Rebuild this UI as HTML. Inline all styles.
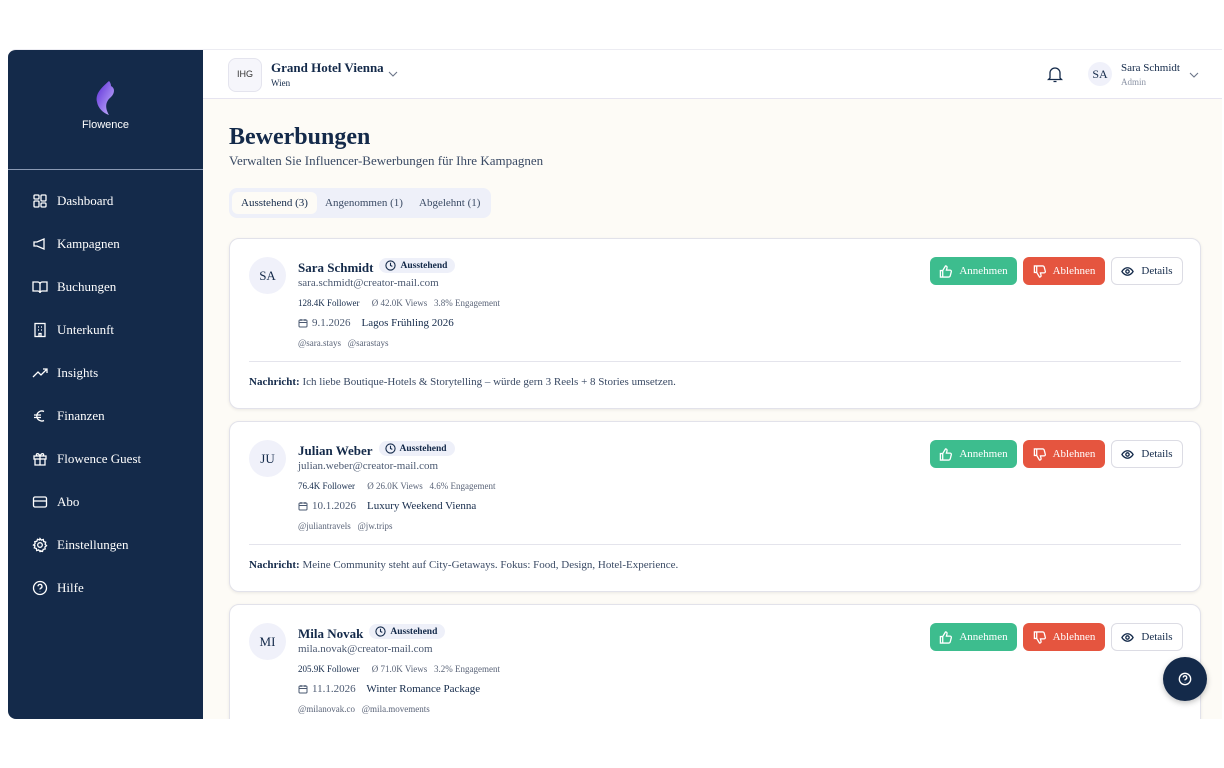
<!DOCTYPE html>
<html><head><meta charset="utf-8"><style>
*{box-sizing:border-box;margin:0;padding:0}
body{width:1224px;height:768px;background:#fff;font-family:"Liberation Serif",serif;color:#142a4a;position:relative;overflow:hidden}
.app{position:absolute;left:8px;top:49px;width:1214px;height:670px;background:#fdfbf6;border-radius:8px 0 0 8px;overflow:hidden;border-top:1px solid #ececf2}
.side{position:absolute;left:0;top:0;width:195px;height:100%;background:#142a4a;color:#fff}
.logo{height:120px;border-bottom:1px solid #8a99b3;text-align:center;font-family:"Liberation Sans",sans-serif;font-size:11px;padding-top:30px}
.nav{position:absolute;left:24px;top:129px}
.nav div{height:43px;display:flex;align-items:center;font-size:13px;color:#fff}
.nav svg{width:16px;height:16px;margin-right:9px;stroke:#fff;fill:none;stroke-width:1.3}
.head{position:absolute;left:195px;top:0;right:0;height:49px;background:#fff;border-bottom:1px solid #e6e4f0}
.main{position:absolute;left:221px;top:49px;right:0}
h1{position:absolute;top:25px;font-size:24px;font-weight:bold}
.sub{position:absolute;top:54px;font-size:13px;color:#3a4a64;white-space:nowrap}
.tabs{position:absolute;top:89px;left:0;width:262px;height:30px;background:#eef0f9;border-radius:8px;font-size:11px;color:#3a4a64}
.tabs span{position:absolute;top:4px;height:22px;line-height:22px;padding:0 8px}
.card{position:absolute;left:0;width:972px;height:171px;background:#fff;border:1px solid #e2e2ea;border-radius:10px;box-shadow:0 1px 3px rgba(0,0,0,.08)}
.av{position:absolute;left:19px;top:18px;width:37px;height:37px;border-radius:50%;background:#f0f1fa;text-align:center;line-height:37px;font-size:13px}
.nm{position:absolute;left:68px;top:19px;font-size:13px;font-weight:bold;white-space:nowrap}
.badge{display:inline-flex;align-items:center;gap:4px;margin-left:6px;background:#eef0f9;border-radius:9px;padding:2px 8px 2px 6px;font-size:9.5px;vertical-align:1px}
.em{position:absolute;left:68px;top:38px;font-size:11px;color:#4a5870}
.st{position:absolute;left:68px;top:59px;font-size:9px;color:#5a6478;white-space:nowrap}
.st b{color:#142a4a;font-weight:normal;margin-right:10px}
.dt{position:absolute;left:68px;top:78px;font-size:11px;white-space:nowrap;display:flex;align-items:center}
.hd{position:absolute;left:68px;top:99px;font-size:9px;color:#5a6478}
.hr{position:absolute;left:19px;right:19px;top:122px;border-top:1px solid #e4e4ec}
.msg{position:absolute;left:19px;top:137px;font-size:11px;color:#3a4a64;white-space:nowrap}
.msg b{color:#142a4a}
.btn{position:absolute;top:18px;height:28px;border-radius:6px;font-size:11px;display:flex;align-items:center;justify-content:center;gap:7px}
.b1{left:700px;width:87px;background:#3dbd8e;color:#fff}
.b2{left:793px;width:82px;background:#e5553f;color:#fff}
.b3{left:881px;width:72px;background:#fff;border:1px solid #dcdce4}
.btn svg{width:13px;height:13px;fill:none;stroke-width:1.4}
</style></head><body>
<div class="app">
<div class="side">
<div class="logo"><svg width="26" height="36" viewBox="0 0 26 36"><defs><linearGradient id="g" x1="0" y1="0" x2="1" y2="1"><stop offset="0" stop-color="#5b2bd6"/><stop offset="1" stop-color="#c9b8ff"/></linearGradient></defs><path d="M16 1 C8 8 2 14 4 22 C5 28 10 33 16 35 C12 28 12 22 18 17 C22 13 22 8 18 6 C18 4 17 2 16 1Z" fill="url(#g)"/></svg><div>Flowence</div></div>
<div class="nav">
<div><svg viewBox="0 0 16 16"><rect x="2" y="2" width="5" height="4" rx="1"/><rect x="9" y="2" width="5" height="6" rx="1"/><rect x="2" y="8" width="5" height="6" rx="1"/><rect x="9" y="10" width="5" height="4" rx="1"/></svg>Dashboard</div>
<div><svg viewBox="0 0 16 16"><path d="M2 6v4h3l7 3V3L5 6z"/></svg>Kampagnen</div>
<div><svg viewBox="0 0 16 16"><path d="M1 3h5c1 0 2 1 2 2v9c0-1-1-2-2-2H1zM15 3h-5c-1 0-2 1-2 2v9c0-1 1-2 2-2h5z"/></svg>Buchungen</div>
<div><svg viewBox="0 0 16 16"><rect x="3" y="1.5" width="10" height="13"/><path d="M6 5h1M9 5h1M6 8h1M9 8h1M7 14.5v-3h2v3"/></svg>Unterkunft</div>
<div><svg viewBox="0 0 16 16"><path d="M1 12l5-5 3 3 6-6M11 4h4v4"/></svg>Insights</div>
<div><svg viewBox="0 0 16 16"><path d="M12 3.5A5 5 0 1 0 12 12.5M2 7h7M2 9.5h7"/></svg>Finanzen</div>
<div><svg viewBox="0 0 16 16"><rect x="2" y="5" width="12" height="3"/><path d="M3 8v6h10V8M8 5v9M8 5C6 1 3 3 5 5M8 5c2-4 5-2 3 0"/></svg>Flowence Guest</div>
<div><svg viewBox="0 0 16 16"><rect x="1.5" y="3" width="13" height="10" rx="1.5"/><path d="M1.5 7h13"/></svg>Abo</div>
<div><svg viewBox="0 0 16 16"><circle cx="8" cy="8" r="2.3"/><path d="M8 1.5l1.3 1.6 2-.6.4 2 2 .7-.6 2 1.4 1.5-1.6 1.3.3 2-2 .4-.7 2-2-.6L8 14.5l-1.3-1.6-2 .6-.4-2-2-.7.6-2L1.5 8l1.6-1.3-.3-2 2-.4.7-2 2 .6z"/></svg>Einstellungen</div>
<div><svg viewBox="0 0 16 16"><circle cx="8" cy="8" r="6.5"/><path d="M6 6.3a2 2 0 1 1 2.5 2c-.5.2-.5.6-.5 1.2M8 11.5v.3"/></svg>Hilfe</div>
</div></div>
<div class="head">
<div style="position:absolute;left:25px;top:8px;width:34px;height:34px;border:1px solid #e4e4ee;border-radius:8px;background:#f6f6fb;text-align:center;font-family:'Liberation Sans',sans-serif;font-size:9px;line-height:30px;color:#333">IHG</div>
<div style="position:absolute;left:68px;top:10px;font-size:13px;font-weight:bold">Grand Hotel Vienna</div>
<div style="position:absolute;left:68px;top:28px;font-size:9px">Wien</div>
<svg style="position:absolute;left:185px;top:20px" width="10" height="8" viewBox="0 0 10 8"><path d="M1 2l4 4 4-4" stroke="#6a7488" fill="none" stroke-width="1.1"/></svg>
<svg style="position:absolute;left:844px;top:16px" width="16" height="17" viewBox="0 0 16 17"><path d="M3 12V7a5 5 0 0 1 10 0v5l1.5 1.5h-13zM6.5 15.5h3" stroke="#142a4a" fill="none" stroke-width="1.3"/></svg>
<div style="position:absolute;left:885px;top:12px;width:24px;height:24px;border-radius:50%;background:#f0f1fa;font-size:12px;text-align:center;line-height:24px">SA</div>
<div style="position:absolute;left:918px;top:12px;font-size:11px">Sara Schmidt</div>
<div style="position:absolute;left:918px;top:27px;font-size:9px;color:#8a92a4">Admin</div>
<svg style="position:absolute;left:986px;top:21px" width="10" height="8" viewBox="0 0 10 8"><path d="M1 2l4 4 4-4" stroke="#6a7488" fill="none" stroke-width="1.1"/></svg>
</div>
<div class="main">
<h1>Bewerbungen</h1>
<div class="sub">Verwalten Sie Influencer-Bewerbungen für Ihre Kampagnen</div>
<div class="tabs"><span style="left:3px;background:#fdfbf6;border-radius:6px;color:#142a4a;padding:0 9px">Ausstehend (3)</span><span style="left:88px">Angenommen (1)</span><span style="left:182px">Abgelehnt (1)</span></div>

<div class="card" style="top:139px">
<div class="av">SA</div>
<div class="nm">Sara Schmidt<span class="badge"><svg width="11" height="11" viewBox="0 0 12 12"><circle cx="6" cy="6" r="5" stroke="#142a4a" fill="none" stroke-width="1.2"/><path d="M6 3v3l2 1" stroke="#142a4a" fill="none" stroke-width="1.2"/></svg>Ausstehend</span></div>
<div class="em">sara.schmidt@creator-mail.com</div>
<div class="st"><b>128.4K Follower</b> Ø 42.0K Views &nbsp; 3.8% Engagement</div>
<div class="dt"><svg width="10" height="10" viewBox="0 0 10 10" style="margin-right:4px"><rect x="1" y="2" width="8" height="7" rx="1" stroke="#4a5870" fill="none"/><path d="M1 4.5h8M3 1v2M7 1v2" stroke="#4a5870"/></svg><span style="color:#4a5870">9.1.2026</span>&nbsp;&nbsp;&nbsp; Lagos Frühling 2026</div>
<div class="hd">@sara.stays &nbsp; @sarastays</div>
<div class="hr"></div>
<div class="msg"><b>Nachricht:</b> Ich liebe Boutique-Hotels &amp; Storytelling – würde gern 3 Reels + 8 Stories umsetzen.</div>
<div class="btn b1"><svg viewBox="0 0 14 14" stroke="#fff"><path d="M4 6v7H1.5V6zM4 6l3-5c1.5 0 2 1 1.5 2.5L8 5.5h4c1 0 1.5 1 1.2 2l-1.2 4.5c-.3.7-.8 1-1.5 1H4"/></svg>Annehmen</div>
<div class="btn b2"><svg viewBox="0 0 14 14" stroke="#fff"><path d="M4 8V1H1.5v7zM4 8l3 5c1.5 0 2-1 1.5-2.5L8 8.5h4c1 0 1.5-1 1.2-2L12 2c-.3-.7-.8-1-1.5-1H4"/></svg>Ablehnen</div>
<div class="btn b3"><svg viewBox="0 0 14 14" stroke="#142a4a"><path d="M1 7s2.2-4 6-4 6 4 6 4-2.2 4-6 4-6-4-6-4z"/><circle cx="7" cy="7" r="1.8"/></svg>Details</div>
</div>

<div class="card" style="top:322px">
<div class="av">JU</div>
<div class="nm">Julian Weber<span class="badge"><svg width="11" height="11" viewBox="0 0 12 12"><circle cx="6" cy="6" r="5" stroke="#142a4a" fill="none" stroke-width="1.2"/><path d="M6 3v3l2 1" stroke="#142a4a" fill="none" stroke-width="1.2"/></svg>Ausstehend</span></div>
<div class="em">julian.weber@creator-mail.com</div>
<div class="st"><b>76.4K Follower</b> Ø 26.0K Views &nbsp; 4.6% Engagement</div>
<div class="dt"><svg width="10" height="10" viewBox="0 0 10 10" style="margin-right:4px"><rect x="1" y="2" width="8" height="7" rx="1" stroke="#4a5870" fill="none"/><path d="M1 4.5h8M3 1v2M7 1v2" stroke="#4a5870"/></svg><span style="color:#4a5870">10.1.2026</span>&nbsp;&nbsp;&nbsp; Luxury Weekend Vienna</div>
<div class="hd">@juliantravels &nbsp; @jw.trips</div>
<div class="hr"></div>
<div class="msg"><b>Nachricht:</b> Meine Community steht auf City-Getaways. Fokus: Food, Design, Hotel-Experience.</div>
<div class="btn b1"><svg viewBox="0 0 14 14" stroke="#fff"><path d="M4 6v7H1.5V6zM4 6l3-5c1.5 0 2 1 1.5 2.5L8 5.5h4c1 0 1.5 1 1.2 2l-1.2 4.5c-.3.7-.8 1-1.5 1H4"/></svg>Annehmen</div>
<div class="btn b2"><svg viewBox="0 0 14 14" stroke="#fff"><path d="M4 8V1H1.5v7zM4 8l3 5c1.5 0 2-1 1.5-2.5L8 8.5h4c1 0 1.5-1 1.2-2L12 2c-.3-.7-.8-1-1.5-1H4"/></svg>Ablehnen</div>
<div class="btn b3"><svg viewBox="0 0 14 14" stroke="#142a4a"><path d="M1 7s2.2-4 6-4 6 4 6 4-2.2 4-6 4-6-4-6-4z"/><circle cx="7" cy="7" r="1.8"/></svg>Details</div>
</div>

<div class="card" style="top:505px">
<div class="av">MI</div>
<div class="nm">Mila Novak<span class="badge"><svg width="11" height="11" viewBox="0 0 12 12"><circle cx="6" cy="6" r="5" stroke="#142a4a" fill="none" stroke-width="1.2"/><path d="M6 3v3l2 1" stroke="#142a4a" fill="none" stroke-width="1.2"/></svg>Ausstehend</span></div>
<div class="em">mila.novak@creator-mail.com</div>
<div class="st"><b>205.9K Follower</b> Ø 71.0K Views &nbsp; 3.2% Engagement</div>
<div class="dt"><svg width="10" height="10" viewBox="0 0 10 10" style="margin-right:4px"><rect x="1" y="2" width="8" height="7" rx="1" stroke="#4a5870" fill="none"/><path d="M1 4.5h8M3 1v2M7 1v2" stroke="#4a5870"/></svg><span style="color:#4a5870">11.1.2026</span>&nbsp;&nbsp;&nbsp; Winter Romance Package</div>
<div class="hd">@milanovak.co &nbsp; @mila.movements</div>
<div class="btn b1"><svg viewBox="0 0 14 14" stroke="#fff"><path d="M4 6v7H1.5V6zM4 6l3-5c1.5 0 2 1 1.5 2.5L8 5.5h4c1 0 1.5 1 1.2 2l-1.2 4.5c-.3.7-.8 1-1.5 1H4"/></svg>Annehmen</div>
<div class="btn b2"><svg viewBox="0 0 14 14" stroke="#fff"><path d="M4 8V1H1.5v7zM4 8l3 5c1.5 0 2-1 1.5-2.5L8 8.5h4c1 0 1.5-1 1.2-2L12 2c-.3-.7-.8-1-1.5-1H4"/></svg>Ablehnen</div>
<div class="btn b3"><svg viewBox="0 0 14 14" stroke="#142a4a"><path d="M1 7s2.2-4 6-4 6 4 6 4-2.2 4-6 4-6-4-6-4z"/><circle cx="7" cy="7" r="1.8"/></svg>Details</div>
</div>
</div>
</div>
<div style="position:absolute;left:1163px;top:657px;width:44px;height:44px;border-radius:50%;background:#142a4a;box-shadow:0 2px 6px rgba(0,0,0,.25)"><svg style="position:absolute;left:15px;top:15px" width="14" height="14" viewBox="0 0 16 16"><circle cx="8" cy="8" r="6.5" stroke="#fff" fill="none" stroke-width="1.5"/><path d="M6 6.3a2 2 0 1 1 2.5 2c-.5.2-.5.6-.5 1.2M8 11.5v.3" stroke="#fff" fill="none" stroke-width="1.5"/></svg></div>
</body></html>
